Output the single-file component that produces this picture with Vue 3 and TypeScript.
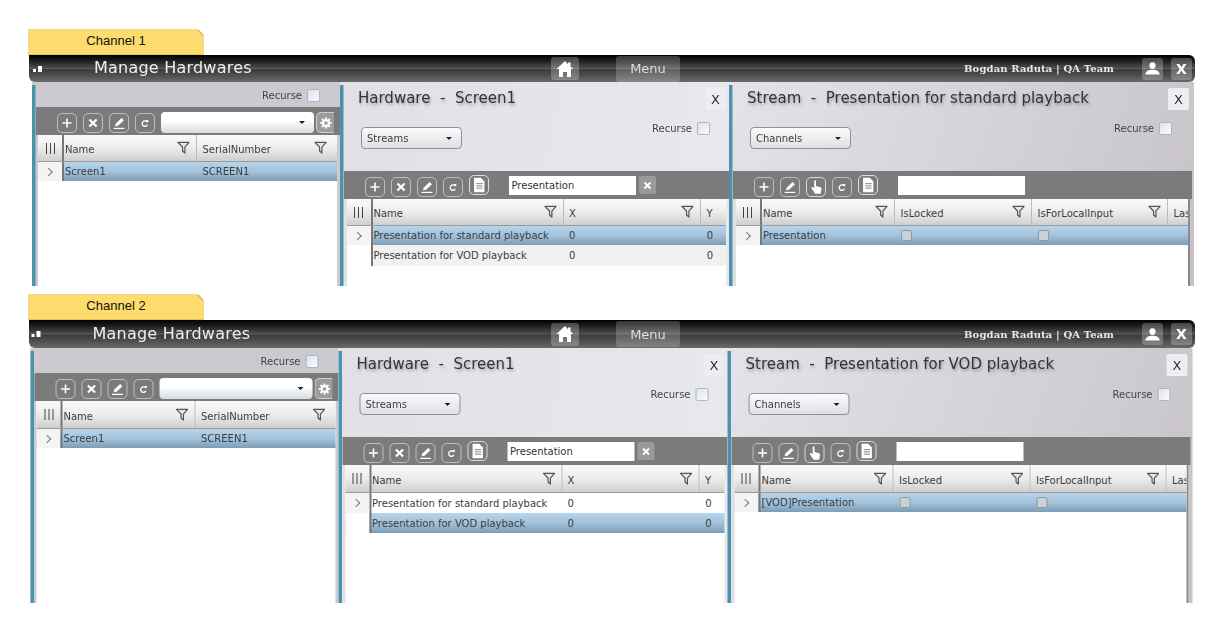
<script setup lang="ts">
interface Column { label: string; filter: boolean }
interface Row { cells: string[]; selected: boolean; stripe?: boolean; checks?: boolean }
interface Panel {
  kind: 'left' | 'mid' | 'right'
  title?: string
  picker?: string
  tools: string[]
  search?: string
  clear?: boolean
  columns: Column[]
  rows: Row[]
}
interface Channel { name: string; cls: string; panels: Panel[] }

const col = (label: string, filter = true): Column => ({ label, filter })

const build = (n: number, stream: string, channel: string): Panel[] => [
  {
    kind: 'left',
    tools: ['plus', 'cross', 'edit', 'refresh'],
    columns: [col('Name'), col('SerialNumber')],
    rows: [{ cells: ['Screen1', 'SCREEN1'], selected: true }],
  },
  {
    kind: 'mid',
    title: 'Hardware  -  Screen1',
    picker: 'Streams',
    tools: ['plus', 'cross', 'edit', 'refresh', 'doc'],
    search: 'Presentation',
    clear: true,
    columns: [col('Name'), col('X'), col('Y', false)],
    rows: [
      { cells: ['Presentation for standard playback', '0', '0'], selected: n === 1 },
      { cells: ['Presentation for VOD playback', '0', '0'], selected: n === 2, stripe: n === 1 },
    ],
  },
  {
    kind: 'right',
    title: 'Stream  -  ' + stream,
    picker: 'Channels',
    tools: ['plus', 'edit', 'hand', 'refresh', 'doc'],
    search: '',
    columns: [col('Name'), col('IsLocked'), col('IsForLocalInput'), col('Las', false)],
    rows: [{ cells: [channel, '', '', ''], selected: true, checks: true }],
  },
]

const channels: Channel[] = [
  { name: 'Channel 1', cls: 'first', panels: build(1, 'Presentation for standard playback', 'Presentation') },
  { name: 'Channel 2', cls: 'second', panels: build(2, 'Presentation for VOD playback', '[VOD]Presentation') },
]
</script>

<template>
  <div class="page">
    <svg class="defs" width="0" height="0" aria-hidden="true">
      <symbol id="i-plus" viewBox="0 0 20 20"><path d="M10 5v10M5 10h10" stroke="#fff" stroke-width="1.800" fill="none" /></symbol>
      <symbol id="i-cross" viewBox="0 0 20 20"><path d="M6 6l8 8M14 6l-8 8" stroke="#fff" stroke-width="2.400" fill="none" /></symbol>
      <symbol id="i-edit" viewBox="0 0 20 20"><path d="M4 16h12" stroke="#fff" stroke-width="1.300" /><path d="M5.500 13.500l1-3L13 4.500l2.500 2.500-6.500 6z" fill="#fff" /></symbol>
      <symbol id="i-refresh" viewBox="0 0 20 20"><path d="M12.200 8.800A3 3 0 1 0 12.600 12" stroke="#fff" stroke-width="1.500" fill="none" /><path d="M10.800 7l3-.6-.4 3.400z" fill="#fff" /></symbol>
      <symbol id="i-doc" viewBox="0 0 20 20"><path d="M4.500 2h7.500l4 4v12H4.500z" fill="#fff" /><path d="M7 8.500h7M7 11h7M7 13.500h7" stroke="#777" stroke-width="1" /></symbol>
      <symbol id="i-hand" viewBox="0 0 20 20"><path d="M8 3.500c0-1.400 2-1.400 2 0V9l5 1.200c1 .3 1.200 1 1 2l-.8 5.300H9L5 11.500c-.6-1 .5-2 1.500-1.200L8 11.500z" fill="#fff" /></symbol>
      <symbol id="i-gear" viewBox="0 0 20 20"><circle cx="10" cy="10" r="3.600" fill="none" stroke="#fff" stroke-width="2.600" /><path d="M10 3v3M10 14v3M3 10h3M14 10h3M5 5l2 2M13 13l2 2M15 5l-2 2M7 13l-2 2" stroke="#fff" stroke-width="2.400" /></symbol>
      <symbol id="i-home" viewBox="0 0 20 20"><path d="M10 2L1.500 10H4v8h4v-5h4v5h4v-8h2.500L15.500 7.600V3.500h-2.500v1.800z" fill="#fff" /></symbol>
      <symbol id="i-user" viewBox="0 0 20 20"><ellipse cx="10" cy="6.500" rx="3.600" ry="4" fill="#fff" /><path d="M1.500 17c.5-4 4-5.500 8.500-5.500s8 1.500 8.500 5.500z" fill="#fff" /></symbol>
      <symbol id="i-funnel" viewBox="0 0 14 14"><path d="M1 1.500h12L8.500 6.500v6.500L6 10.800V6.500z" fill="#e8e8e8" stroke="#555" stroke-width="1.300" stroke-linejoin="round" /></symbol>
    </svg>

    <section v-for="ch in channels" :key="ch.name" class="channel" :class="ch.cls">
      <div class="tab">{{ ch.name }}</div>

      <header class="bar">
        <div class="brand">
          <span class="dots"><i></i><i></i></span>
          <span class="app-title">Manage Hardwares</span>
        </div>
        <button class="bar-btn home"><svg width="20" height="20"><use href="#i-home" /></svg></button>
        <button class="bar-btn menu">Menu</button>
        <span class="who">Bogdan Raduta | QA Team</span>
        <button class="bar-btn square"><svg width="17" height="17"><use href="#i-user" /></svg></button>
        <button class="bar-btn square close">X</button>
      </header>

      <div class="panels">
        <article v-for="p in ch.panels" :key="p.kind" class="panel" :class="p.kind">
          <div class="head">
            <template v-if="p.title">
              <div class="title-row">
                <h2>{{ p.title }}</h2>
                <button class="close-x">X</button>
              </div>
              <div class="pick-row">
                <div class="picker"><span>{{ p.picker }}</span><b class="caret"></b></div>
                <label class="recurse">Recurse <i class="check"></i></label>
              </div>
            </template>
            <label v-else class="recurse">Recurse <i class="check"></i></label>
          </div>

          <div class="toolbar">
            <span v-for="t in p.tools" :key="t" class="tool" :class="'t-' + t">
              <svg width="18" height="18"><use :href="'#i-' + t" /></svg>
            </span>
            <div v-if="p.kind === 'left'" class="combo"><b class="caret"></b></div>
            <span v-if="p.kind === 'left'" class="tool gear"><svg width="16" height="16"><use href="#i-gear" /></svg></span>
            <div v-if="p.kind !== 'left'" class="search">{{ p.search }}</div>
            <span v-if="p.clear" class="clear"><svg width="15" height="15"><use href="#i-cross" /></svg></span>
          </div>

          <div class="table">
            <div class="tr th">
              <div class="gutter"><span class="bars"><i></i><i></i><i></i></span></div>
              <div v-for="(c, i) in p.columns" :key="c.label" class="cell" :class="{ name: i === 0 }">
                <span>{{ c.label }}</span>
                <svg v-if="c.filter" class="funnel" width="13" height="13"><use href="#i-funnel" /></svg>
              </div>
            </div>
            <div v-for="(r, ri) in p.rows" :key="r.cells[0]" class="tr td" :class="{ sel: r.selected, stripe: r.stripe }">
              <div class="gutter" :class="{ lead: ri === 0 }"><span v-if="ri === 0" class="chev"></span></div>
              <div v-for="(v, i) in r.cells" :key="i" class="cell" :class="{ name: i === 0, num: p.kind === 'mid' && i === 2 }">
                <i v-if="r.checks && (i === 1 || i === 2)" class="cellcheck"></i>
                <span v-else>{{ v }}</span>
              </div>
            </div>
          </div>
        </article>
      </div>
    </section>
  </div>
</template>

<style scoped>
.page {
  width: 1224px;
  height: 632px;
  box-sizing: border-box;
  padding: 29px 0 0 28px;
  font-family: "DejaVu Sans", sans-serif;
  font-size: 10px;
  color: #3c3c3c;
  background: #fff;
  overflow: hidden;
}
.defs { position: absolute; }
button { font-family: inherit; border: 0; padding: 0; }

.channel { width: 1167px; filter: blur(0.4px); }
.first { height: 265px; --shift: 0px; --bar: 27px; --panel: 204px; }
.second { height: 310px; --shift: -1.5px; --bar: 28px; --panel: 255px; }

.tab {
  width: 176px;
  height: 26px;
  box-sizing: border-box;
  background: linear-gradient(225deg, #c9b778 0 4px, #fddc6d 4.500px);
  border: 1px solid #efd98c;
  border-bottom-color: #e5c64e;
  clip-path: polygon(0 0, 170px 0, 176px 6px, 176px 100%, 0 100%);
  font: 13px "Liberation Sans", sans-serif;
  color: #111;
  text-align: center;
  line-height: 22px;
}

.bar {
  height: var(--bar);
  width: 1166px;
  margin-left: 1px;
  border-radius: 0 6px 6px 6px;
  background: linear-gradient(#000, #1c1c1c 20%, #4a4a4a 47%, #5c5c5c 50%, #3a3a3a 54%, #4f4f4f 75%, #6a6a6a 100%);
  display: flex;
  align-items: center;
  padding-right: 3px;
  box-sizing: border-box;
}
.brand { width: 522px; display: flex; align-items: center; flex: none; transform: translateX(var(--shift)); }
.dots { margin-left: 4px; display: flex; align-items: flex-end; gap: 2px; width: 61px; }
.dots i { display: block; background: #fff; width: 3px; height: 3px; }
.dots i + i { width: 4px; height: 6px; }
.app-title { color: #eee; font-size: 16px; letter-spacing: .22px; margin-top: -2px; }
.bar-btn {
  background: rgba(255, 255, 255, .24);
  border-radius: 3px;
  color: #ddd;
  display: flex;
  align-items: center;
  justify-content: center;
  flex: none;
}
.home { width: 28px; height: 23px; }
.menu { width: 64px; height: 26px; margin-left: 37px; font-size: 13px; background: rgba(255, 255, 255, .2); }
.who {
  margin-left: auto;
  margin-right: 28px;
  font: bold 10px "DejaVu Serif", serif;
  letter-spacing: .13px;
  color: #e8e8e8;
}
.square { width: 21px; height: 22px; }
.close { margin-left: 8px; color: #fff; font-size: 14px; font-weight: 700; }

.panels {
  height: var(--panel);
  margin-left: 4px;
  width: 1162px;
  display: grid;
  grid-template-columns: 308px 389px 465px;
  transform: translateX(var(--shift));
}
.panel {
  padding-left: 3.500px;
  box-sizing: border-box;
  display: flex;
  flex-direction: column;
  min-width: 0;
  overflow: hidden;
}
.panel.left { background: linear-gradient(#4a93ab, #4a93ab) no-repeat 0 3px / 3.500px 100%, #cdc9d0; }
.panel.mid { background: linear-gradient(#4a93ab, #4a93ab) no-repeat 0 3px / 3.500px 100%, linear-gradient(100deg, #e1e0e7, #e9e8ee); }
.panel.right { background: linear-gradient(#4a93ab, #4a93ab) no-repeat 0 3px / 3.500px 100%, linear-gradient(110deg, #e4e3ea, #c6c2c8); }

.head { flex: none; box-sizing: border-box; }
.left .head { height: 25px; display: flex; justify-content: flex-end; align-items: center; padding-right: 20px; padding-top: 2px; }
.mid .head, .right .head { height: 89px; padding: 6px 3px 0 14.500px; }
.right .head { padding-right: 5px; }
.title-row { display: flex; justify-content: space-between; align-items: flex-start; height: 22px; }
h2 {
  margin: 0;
  font-size: 15px;
  font-weight: 400;
  color: #333;
  white-space: pre;
  line-height: 20px;
  text-shadow: 1px 2px 3px rgba(0, 0, 0, .3);
}
.close-x {
  width: 21px;
  height: 22px;
  background: #eeedf2;
  color: #333;
  font-size: 13px;
  border-radius: 2px;
}
.pick-row { display: flex; justify-content: space-between; align-items: flex-start; margin-top: 17px; padding-right: 16px; }
.right .pick-row { padding-right: 17px; }
.pick-row .recurse { margin-top: -5px; }
.picker {
  width: 101px;
  height: 22px;
  box-sizing: border-box;
  margin-left: 3px;
  border: 1px solid #87929c;
  border-radius: 4px;
  background: linear-gradient(#fbfbfc, #dfe0e4);
  display: flex;
  align-items: center;
  justify-content: space-between;
  padding: 0 9px 0 5px;
}
.caret { width: 0; height: 0; border: 3px solid transparent; border-top: 3.500px solid #222; border-bottom: 0; }
.recurse { display: flex; align-items: center; gap: 5px; font-size: 10px; color: #444; }
.check, .cellcheck {
  display: block;
  width: 13px;
  height: 13px;
  box-sizing: border-box;
  border: 1px solid #a8b8c8;
  border-radius: 2px;
  background: linear-gradient(135deg, #dde3ea, #fbfcfd);
}
.cellcheck { background: #c9d0d6; border-color: #8f9aa2; width: 11px; height: 11px; }

.toolbar {
  flex: none;
  height: 28px;
  background: #7b7b7b;
  display: flex;
  align-items: center;
  gap: 6px;
  box-sizing: border-box;
  padding: 3px 0 0 21.500px;
}
.right .toolbar { margin-right: 2px; }
.tool {
  width: 20px;
  height: 20px;
  box-sizing: border-box;
  border: 1.500px solid rgba(255, 255, 255, .5);
  border-radius: 5px;
  display: flex;
  align-items: center;
  justify-content: center;
  flex: none;
}
.tool svg { flex: none; }
.tool.t-doc { border-color: rgba(255, 255, 255, .75); margin-top: -3px; }
.tool.t-hand { border-color: rgba(255, 255, 255, .7); }
.combo {
  width: 153px;
  height: 21px;
  background: linear-gradient(#fff 40%, #d5dde3);
  border-radius: 4px;
  display: flex;
  align-items: center;
  justify-content: flex-end;
  padding-right: 9px;
  box-sizing: border-box;
  flex: none;
}
.tool.gear { margin-left: -4px; width: 18px; height: 21px; background: rgba(255, 255, 255, .25); border-right: 0; border-radius: 5px 0 0 5px; }
.search {
  width: 127px;
  height: 19px;
  box-sizing: border-box;
  margin: -3px 0 0 13.500px;
  background: #fff;
  padding-left: 3px;
  line-height: 19px;
  color: #333;
  flex: none;
}
.clear {
  width: 17px;
  height: 18px;
  margin: -3px 0 0 -3px;
  background: #9a9a9a;
  border-radius: 2px;
  display: flex;
  align-items: center;
  justify-content: center;
}

.table { flex: 1; min-height: 0; background: #fff; margin: 0 3px 0 3px; }
.left .table { margin-left: 2.500px; }
.right .table { margin-right: 4px; border-right: 2px solid #8a8a8a; }
.tr { display: grid; }
.left .tr { grid-template-columns: 24px 135px 136px 1fr; }
.mid .tr { grid-template-columns: 24px 193px 137.500px 1fr; }
.right .tr { grid-template-columns: 24.500px 135px 137px 136px 1fr; }
.th { height: 27px; background: linear-gradient(#fafafa, #ececec 50%, #cfcfcf); border-bottom: 1px solid #9b9b9b; box-sizing: border-box; }
.second .th { height: 28px; }
.td { height: 19px; }
.second .mid .td { height: 20px; }
.td.sel { background: linear-gradient(#b7d4ea, #a3c3dc 50%, #7d9db7); }
.td.stripe { height: 21px; background: #f1f1f1; }
.td .gutter { background: #fff; }
.td .gutter.lead { background: #f4f4f4; }
.gutter { display: flex; align-items: center; justify-content: center; }
.bars { display: flex; gap: 3px; }
.bars i { display: block; width: 1px; height: 11px; background: #444; }
.chev { width: 5px; height: 5px; border-top: 1px solid #777; border-right: 1px solid #777; transform: rotate(45deg) translate(-1px, 1px); }
.cell {
  display: flex;
  align-items: center;
  justify-content: space-between;
  padding: 0 6px 0 5.500px;
  min-width: 0;
  overflow: hidden;
  white-space: nowrap;
  box-sizing: border-box;
}
.th .cell { border-right: 1px solid #bdbdbd; }
.th .cell:last-child { border-right: 0; }
.th .cell span { margin-top: 3px; }
.cell.name { border-left: 2.500px solid #777; padding-left: 1px; }
.td .cell.num { justify-content: flex-end; padding-right: 13px; }
.funnel { flex: none; margin-top: -1px; }
</style>
